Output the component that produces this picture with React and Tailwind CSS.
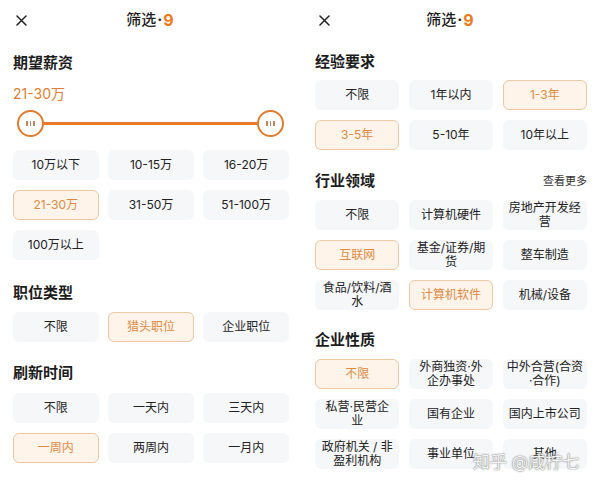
import React from "react";

const ORANGE = "text-[#e07f33]";

const Option = ({ label, active }) => (
  <div
    className={`h-[30px] rounded-[6px] flex items-center justify-center text-center text-[12px] leading-[14px] whitespace-pre ${
      active
        ? "bg-[#fef4ea] border border-[#ecc7a2] text-[#df8a44]"
        : "bg-[#f6f7f9] text-[#222]"
    }`}
  >
    {label}
  </div>
);

const OptionGrid = ({ items, active = [], className = "" }) => (
  <div className={`grid grid-cols-3 gap-x-[9.5px] gap-y-[10px] ${className}`}>
    {items.map((label) => (
      <Option key={label} label={label} active={active.includes(label)} />
    ))}
  </div>
);

const Heading = ({ children, className = "", extra }) => (
  <div className={`flex items-center justify-between h-[22px] ${className}`}>
    <h2 className="text-[15px] font-bold text-[#1c1c1c] leading-[22px]">
      {children}
    </h2>
    {extra}
  </div>
);

const Header = ({ xPad }) => (
  <div className="grid grid-cols-[1fr_auto_1fr] items-center h-10">
    <div className={xPad}>
      <svg width="11" height="11" viewBox="0 0 11 11" fill="none">
        <path
          d="M1 1L10 10M10 1L1 10"
          stroke="#222"
          strokeWidth="1.5"
          strokeLinecap="round"
        />
      </svg>
    </div>
    <div className="text-[15px] font-medium text-[#1c1c1c] flex items-center">
      筛选<span className="mx-[1px] font-bold">·</span>
      <span className="text-[#ef7a1c] font-bold text-[16px]">9</span>
    </div>
    <div />
  </div>
);

const Thumb = () => (
  <div className="w-[27px] h-[27px] rounded-full border-2 border-[#e07b2c] bg-white flex items-center justify-center gap-[2px] shrink-0">
    <span className="w-[1.5px] h-[5px] bg-[#b9875f]" />
    <span className="w-[1.5px] h-[5px] bg-[#b9875f]" />
    <span className="w-[1.5px] h-[5px] bg-[#b9875f]" />
  </div>
);

export default function App() {
  return (
    <div
      className="w-[600px] h-[486px] bg-white flex overflow-hidden relative"
      style={{ fontFamily: 'Inter, "Noto Sans CJK SC", sans-serif' }}
    >
      {/* left panel */}
      <div className="w-[300px] flex flex-col">
        <Header xPad="pl-[16px]" />
        <div className="pl-[13px] pr-[11px] flex flex-col">
          <Heading className="mt-[12px]">期望薪资</Heading>
          <div className={`mt-[10px] text-[14px] leading-[20px] ${ORANGE}`}>
            21-30万
          </div>
          <div className="mt-[6px] ml-[4px] w-[267px] flex items-center">
            <Thumb />
            <div className="flex-1 h-[3px] bg-[#e8792a]" />
            <Thumb />
          </div>
          <OptionGrid
            className="mt-[13px] gap-y-[10.5px]"
            items={["10万以下", "10-15万", "16-20万", "21-30万", "31-50万", "51-100万", "100万以上"]}
            active={["21-30万"]}
          />
          <Heading className="mt-[22px]">职位类型</Heading>
          <OptionGrid
            className="mt-[8px]"
            items={["不限", "猎头职位", "企业职位"]}
            active={["猎头职位"]}
          />
          <Heading className="mt-[20px]">刷新时间</Heading>
          <OptionGrid
            className="mt-[9px]"
            items={["不限", "一天内", "三天内", "一周内", "两周内", "一月内"]}
            active={["一周内"]}
          />
        </div>
      </div>

      {/* right panel */}
      <div className="w-[300px] flex flex-col">
        <Header xPad="pl-[19px]" />
        <div className="pl-[15px] pr-[13px] flex flex-col">
          <Heading className="mt-[11px]">经验要求</Heading>
          <OptionGrid
            className="mt-[7px]"
            items={["不限", "1年以内", "1-3年", "3-5年", "5-10年", "10年以上"]}
            active={["1-3年", "3-5年"]}
          />
          <Heading
            className="mt-[20px]"
            extra={<span className="text-[11px] text-[#333]">查看更多</span>}
          >
            行业领域
          </Heading>
          <OptionGrid
            className="mt-[8px]"
            items={[
              "不限",
              "计算机硬件",
              "房地产开发经\n营",
              "互联网",
              "基金/证券/期\n货",
              "整车制造",
              "食品/饮料/酒\n水",
              "计算机软件",
              "机械/设备",
            ]}
            active={["互联网", "计算机软件"]}
          />
          <Heading className="mt-[19px]">企业性质</Heading>
          <OptionGrid
            className="mt-[8px]"
            items={[
              "不限",
              "外商独资·外\n企办事处",
              "中外合营(合资\n·合作)",
              "私营·民营企\n业",
              "国有企业",
              "国内上市公司",
              "政府机关 / 非\n盈利机构",
              "事业单位",
              "其他",
            ]}
            active={["不限"]}
          />
        </div>
      </div>

      {/* watermark */}
      <div className="absolute left-[473px] top-[450px] text-[17px] leading-[24px] text-[#f4f4f4] [text-shadow:0_0_1px_#777,0_0_2px_#999] whitespace-nowrap">
        知乎 @咸柠七
      </div>
    </div>
  );
}
